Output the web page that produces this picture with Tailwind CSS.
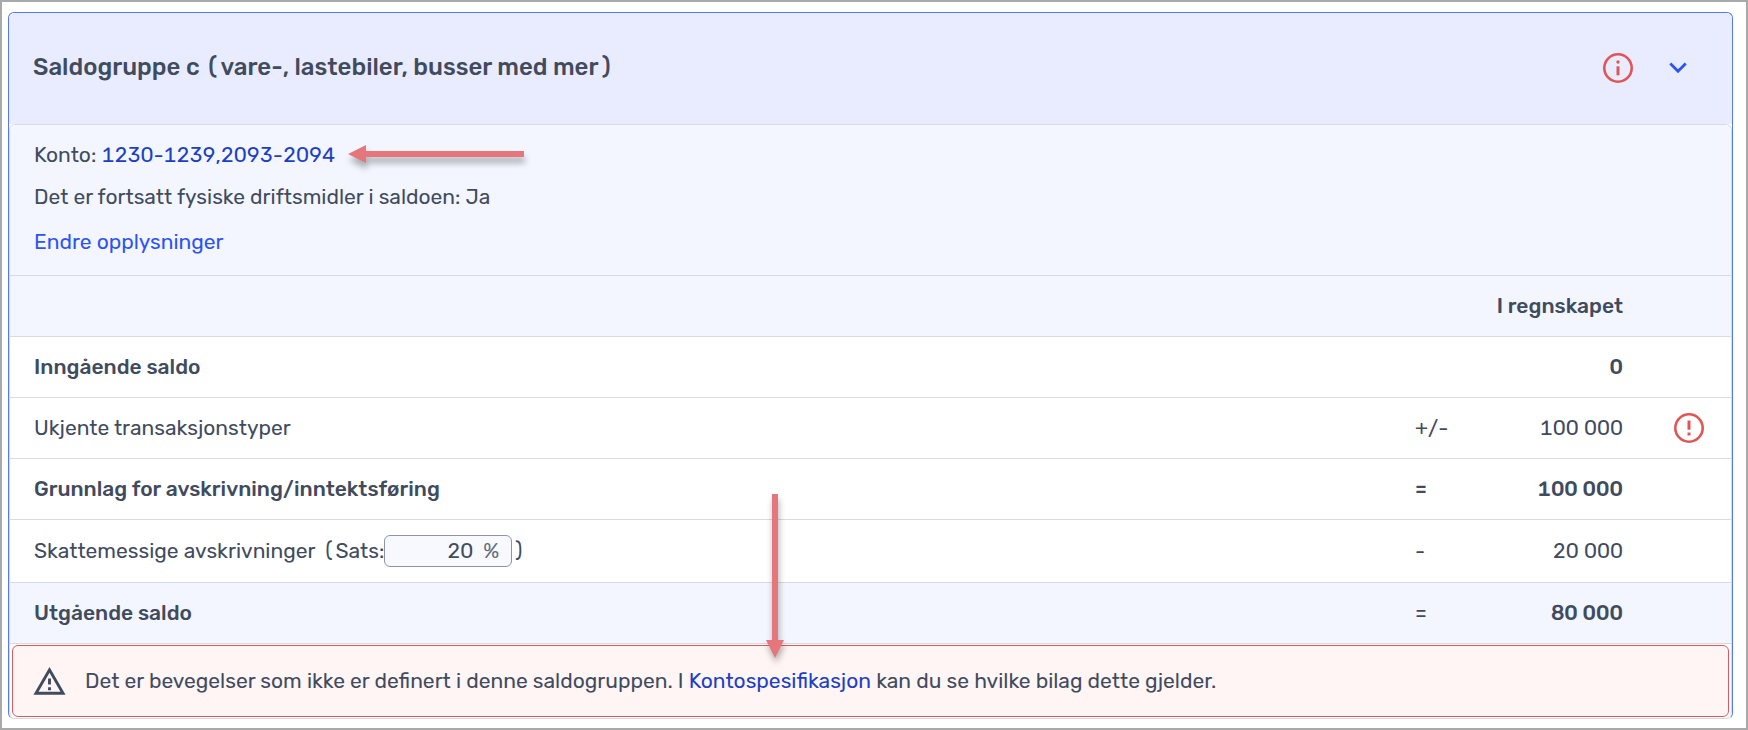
<!DOCTYPE html>
<html lang="nb">
<head>
<meta charset="utf-8">
<meta name="viewport" content="width=device-width, initial-scale=1">
<title>Saldogruppe c</title>
<script src="https://cdn.jsdelivr.net/npm/@tailwindcss/browser@4"></script>
</head>
<body class="min-h-screen border-2 border-[#a9a9a9] bg-white pt-[10px] pr-[13px] pb-[9px] pl-[6px] font-['Rubik','Roboto',sans-serif] text-[21px] leading-[30px] text-[#414b5e] tabular-nums">
<main class="rounded-md border border-[#5479f7] border-b-[#d5d9e3] bg-white">
  <header class="flex h-[111px] items-center justify-between rounded-t-md bg-[#e9ecfe] pr-[39px] pb-[2px] pl-6">
    <h1 class="pb-[2px] text-[24px] font-medium">Saldogruppe c (vare-, lastebiler, busser med mer)</h1>
    <div class="flex items-center gap-[30px]">
      <button type="button" aria-label="Informasjon" class="size-[30px]">
        <svg viewBox="0 0 30 30" class="size-[30px]" fill="none"><circle cx="15" cy="15" r="13.7" stroke="#e05656" stroke-width="2.6"/><path d="M15 13.3v9" stroke="#e05656" stroke-width="3"/><circle cx="15" cy="9" r="1.7" fill="#e05656"/></svg>
      </button>
      <button type="button" aria-label="Skjul saldogruppe" class="size-[30px]">
        <svg viewBox="0 0 30 30" class="size-[30px]" fill="none" stroke="#2d53f3" stroke-width="2.8"><path d="M7.3 10.5 15 18.2 22.7 10.5"/></svg>
      </button>
    </div>
  </header>

  <section class="rounded-md border border-[#d9dbe0] border-b-0">
    <div class="flex flex-col items-start rounded-t-md bg-[#f3f6fe] px-6 pt-[15px] pb-[18px]">
      <p class="flex items-center">Konto:&nbsp;<a href="#konto" class="text-[#1c40c5]">1230-1239,2093-2094</a>
        <svg viewBox="0 0 176 20" class="mb-[2px] ml-[13px] h-5 w-44 overflow-visible drop-shadow-[1px_6px_3px_rgba(0,0,0,0.3)]" aria-hidden="true"><path d="M0 10 18 1v6h158v6H18v6z" fill="#e5777c"/></svg>
      </p>
      <p class="mt-3">Det er fortsatt fysiske driftsmidler i saldoen: Ja</p>
      <a href="#endre" class="mt-[15px] text-[#2d53f3]">Endre opplysninger</a>
    </div>

    <table class="w-full table-fixed border-collapse text-left">
      <colgroup><col><col class="w-[80px]"><col class="w-[128px]"><col class="w-[108px]"></colgroup>
      <thead>
        <tr class="h-[61px] border-y border-[#d9dbe0] bg-[#f3f6fe]">
          <th colspan="3" scope="col" class="text-right font-medium">I regnskapet</th><td></td>
        </tr>
      </thead>
      <tbody>
        <tr class="h-[61px] border-b border-[#d9dbe0] font-medium">
          <th scope="row" class="pl-6 font-medium">Inngående saldo</th><td></td><td class="text-right">0</td><td></td>
        </tr>
        <tr class="h-[61px] border-b border-[#d9dbe0]">
          <th scope="row" class="pl-6 font-normal">Ukjente transaksjonstyper</th><td>+/-</td><td class="text-right">100 000</td>
          <td class="pl-[51px]">
            <button type="button" aria-label="Feil" class="block size-[30px]">
              <svg viewBox="0 0 30 30" class="size-[30px]" fill="none" stroke="#e05656"><circle cx="15" cy="15" r="13.7" stroke-width="2.6"/><path d="M15 7.5v9.3M15 19.5v3" stroke-width="3"/></svg>
            </button>
          </td>
        </tr>
        <tr class="h-[61px] border-b border-[#d9dbe0] font-medium">
          <th scope="row" class="pl-6 font-medium">Grunnlag for avskrivning/inntektsføring</th><td>=</td><td class="text-right">100 000</td><td></td>
        </tr>
        <tr class="h-[63px] border-b border-[#d9dbe0]">
          <th scope="row" class="pl-6 font-normal">
            <div class="flex items-center">
              <label for="sats" class="flex gap-[7px]"><span>Skattemessige avskrivninger</span><span>(Sats:</span></label>
              <span class="flex h-8 w-32 items-center rounded-md border border-[#8d94a3] bg-[#f8f9ff] pr-3">
                <input id="sats" type="text" value="20" class="w-full min-w-0 bg-transparent text-right outline-none">
                <span class="ml-[10px] text-[#626b7b]">%</span>
              </span>
              <span>)</span>
            </div>
          </th><td>-</td><td class="text-right">20 000</td><td></td>
        </tr>
        <tr class="h-[61px] border-b border-[#d9dbe0] bg-[#f3f6fe]">
          <th scope="row" class="pl-6 font-medium">Utgående saldo</th><td>=</td><td class="text-right font-medium">80 000</td><td></td>
        </tr>
      </tbody>
    </table>

    <div role="alert" class="mx-[2px] mt-px mb-px flex h-[72px] items-center gap-[18px] rounded-md border border-[#df5a5e] bg-[#fff5f5] px-[19px]">
      <svg viewBox="0 0 24 24" class="size-[35px] shrink-0" fill="currentColor" aria-hidden="true"><path d="M12 5.99 19.53 19H4.47zM12 2 1 21h22zm1 14h-2v2h2zm0-6h-2v4h2z"/></svg>
      <p>Det er bevegelser som ikke er definert i denne saldogruppen. I <a href="#kontospesifikasjon" class="relative text-[#1c40c5]">Kontospesifikasjon<svg viewBox="0 0 20 164" class="absolute bottom-[35px] left-[76px] h-[164px] w-5 overflow-visible drop-shadow-[1px_5px_3px_rgba(0,0,0,0.3)]" aria-hidden="true"><path d="M7 0h6v146h6l-9 18-9-18h6z" fill="#e5777c"/></svg></a> kan du se hvilke bilag dette gjelder.</p>
    </div>
  </section>
</main>
</body>
</html>
